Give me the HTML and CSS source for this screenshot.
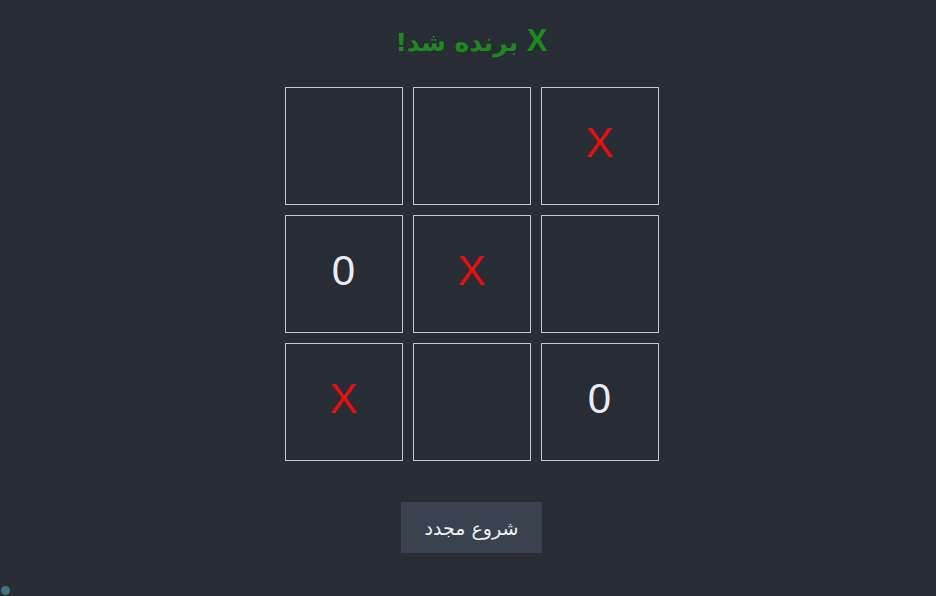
FILE: index.html
```html
<!DOCTYPE html>
<html lang="fa">
<head>
  <meta charset="UTF-8" />
  <meta name="viewport" content="width=device-width, initial-scale=1.0"/>
  <title>دوز</title>
  <link rel="stylesheet" href="styles.css">
</head>
<body>
  <div class="game">
    <h1 class="status" dir="rtl"><span class="winner">X</span> برنده شد!</h1>
    <div class="board" dir="ltr">
      <div class="cell"></div>
      <div class="cell"></div>
      <div class="cell x">X</div>
      <div class="cell o">0</div>
      <div class="cell x">X</div>
      <div class="cell"></div>
      <div class="cell x">X</div>
      <div class="cell"></div>
      <div class="cell o">0</div>
    </div>
    <button class="restart" dir="rtl">شروع مجدد</button>
  </div>
  <span class="corner-dot"></span>
</body>
</html>
```

FILE: styles.css
```css
* {
  box-sizing: border-box;
}

html, body {
  margin: 0;
  padding: 0;
  height: 100%;
}

body {
  background: #282c34;
  font-family: "Noto Sans", "DejaVu Sans", sans-serif;
  color: #e6e8ee;
  overflow: hidden;
}

.game {
  display: flex;
  flex-direction: column;
  align-items: center;
  padding: 20px 0 0 7px;
}

.status {
  margin: 0;
  height: 42px;
  line-height: 42px;
  font-size: 25px;
  font-weight: 700;
  color: #1c8a1c;
  font-family: "DejaVu Sans", sans-serif;
}

.status .winner {
  font-family: "Liberation Sans", sans-serif;
  font-size: 31px;
}

.board {
  margin-top: 25px;
  display: grid;
  grid-template-columns: repeat(3, 118px);
  grid-auto-rows: 118px;
  gap: 10px;
}

.cell {
  border: 1px solid #c4c8ce;
  display: flex;
  align-items: center;
  justify-content: center;
  padding-bottom: 6px;
  font-family: "Liberation Sans", sans-serif;
  font-size: 42px;
  user-select: none;
}

.cell.x {
  color: #e41010;
}

.cell.o {
  color: #e8ebf2;
}

.restart {
  margin-top: 41px;
  width: 141px;
  height: 51px;
  border: none;
  background: #3a4250;
  color: #eef0f4;
  font-family: "DejaVu Sans", sans-serif;
  font-size: 19px;
  cursor: pointer;
}

.corner-dot {
  position: fixed;
  left: 1px;
  bottom: 1px;
  width: 9px;
  height: 9px;
  border-radius: 50%;
  background: #3f7484;
}
```
